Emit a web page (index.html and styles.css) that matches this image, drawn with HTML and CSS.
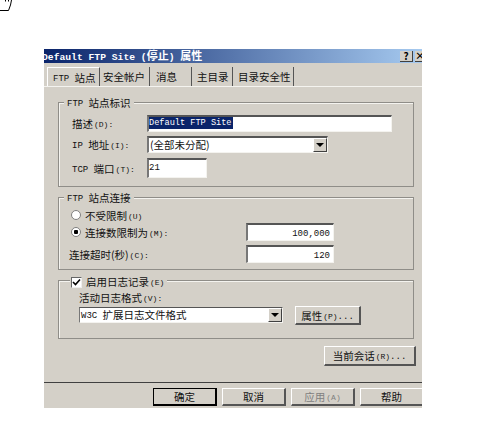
FILE: index.html
```html
<!DOCTYPE html>
<html>
<head>
    <title>Default FTP Site (停止) 属性</title>
    <link rel="stylesheet" href="styles.css">
</head>
<body>
    <svg class="cursor" width="14" height="12" viewBox="0 0 14 12">
        <path d="M11.5 0 L10.5 5 L8.5 10.5 L0 10.5 M5.5 0 V1.5 M8.5 0 V1.5" fill="none" stroke="#000"/>
    </svg>

    <div class="dialog">
        <div class="titlebar">
            <span class="title"><span class="en">Default FTP Site (</span><span class="title-cn">停止</span><span class="en">) </span><span class="title-cn">属性</span></span>
            <span class="cap-btn">?</span>
            <span class="cap-btn cap-close">×</span>
        </div>

        <div class="tabs">
            <div class="tab tab-active"><span class="en">FTP </span>站点</div>
            <div class="tab">安全帐户</div>
            <div class="tab tab-pad">消息</div>
            <div class="tab tab-home">主目录</div>
            <div class="tab tab-last">目录安全性</div>
        </div>

        <div class="page">
            <div class="group group-site">
                <div class="group-title"><span class="en">FTP </span>站点标识</div>
                <div class="form-row">
                    <label class="form-label">描述<span class="mn">(D):</span></label>
                    <div class="field field-desc"><span class="selected en">Default FTP Site</span></div>
                </div>
                <div class="form-row">
                    <label class="form-label"><span class="en">IP </span>地址<span class="mn">(I):</span></label>
                    <div class="field combo combo-ip">
                        <span class="combo-text">(全部未分配)</span>
                        <span class="combo-btn"><i class="arrow"></i></span>
                    </div>
                </div>
                <div class="form-row form-row-tcp">
                    <label class="form-label"><span class="en">TCP </span>端口<span class="mn">(T):</span></label>
                    <div class="field field-port"><span class="en">21</span></div>
                </div>
            </div>

            <div class="group group-conn">
                <div class="group-title"><span class="en">FTP </span>站点连接</div>
                <div class="radio-row">
                    <span class="radio"></span>
                    <span>不受限制<span class="mn">(U)</span></span>
                </div>
                <div class="radio-row radio-row-input">
                    <span class="radio radio-on"></span>
                    <span class="grow">连接数限制为<span class="mn">(M):</span></span>
                    <div class="field field-num"><span class="en">100,000</span></div>
                </div>
                <div class="timeout-row">
                    <span class="grow">连接超时(秒)<span class="mn">(C):</span></span>
                    <div class="field field-num"><span class="en">120</span></div>
                </div>
            </div>

            <div class="group group-log">
                <div class="group-title group-title-check">
                    <span class="check">
                        <svg width="9" height="9" viewBox="0 0 9 9"><path d="M1 4 L3.5 6.5 L8 1.5" fill="none" stroke="#000" stroke-width="1.6"/></svg>
                    </span>
                    <span>启用日志记录<span class="mn">(E)</span></span>
                </div>
                <div class="log-label">活动日志格式<span class="mn">(V):</span></div>
                <div class="log-row">
                    <div class="field combo combo-log">
                        <span class="combo-text"><span class="en">W3C </span>扩展日志文件格式</span>
                        <span class="combo-btn"><i class="arrow"></i></span>
                    </div>
                    <button class="btn btn-props">属性<span class="mn">(P)</span><span class="en">...</span></button>
                </div>
            </div>

            <div class="session-row">
                <button class="btn btn-session">当前会话<span class="mn">(R)</span><span class="en">...</span></button>
            </div>
        </div>

        <div class="footer">
            <button class="btn btn-default">确定</button>
            <button class="btn">取消</button>
            <button class="btn btn-disabled">应用<span class="mn">(A)</span></button>
            <button class="btn">帮助</button>
        </div>
    </div>
</body>
</html>
```

FILE: styles.css
```css
html, body {
    margin: 0;
    padding: 0;
    background: #fff;
}

body {
    padding: 49px 0 0 44px;
    font-family: "Noto Sans CJK SC", "Liberation Sans", sans-serif;
    font-size: 10.5px;
    color: #111;
}

.en {
    font-family: "Liberation Mono", monospace;
    font-size: 9px;
    vertical-align: 1px;
}

.mn {
    margin-left: 1px;
    font-family: "Liberation Mono", monospace;
    font-size: 8px;
    vertical-align: 1px;
}

.cursor {
    position: absolute;
    left: 0;
    top: 0;
}

.dialog {
    width: 378px;
    height: 359px;
    background: #d4d0c8;
    overflow: hidden;
}

.titlebar {
    display: flex;
    align-items: center;
    height: 14px;
    background: linear-gradient(to right, #0a246a, #a6caf0);
    color: #fff;
    font-weight: bold;
}

.title {
    flex: 1;
    margin-left: -2px;
    white-space: nowrap;
    line-height: 14px;
}

.title .en {
    font-size: 9.7px;
    font-weight: bold;
    vertical-align: 0;
}

.title-cn {
    font-size: 11px;
    line-height: 14px;
}

.cap-btn {
    width: 13px;
    height: 11px;
    margin-right: 2px;
    background: #d4d0c8;
    border-right: 1px solid #404040;
    border-bottom: 1px solid #404040;
    box-sizing: border-box;
    color: #000;
    font-size: 10px;
    line-height: 10px;
    text-align: center;
}

.cap-close {
    flex: none;
    width: 7px;
    margin-right: 0;
    border-right: 0;
    overflow: hidden;
}

.tabs {
    display: flex;
    height: 23px;
    box-sizing: border-box;
    padding: 4px 0 0 3px;
}

.tab {
    height: 19px;
    box-sizing: border-box;
    padding: 0 4px 0 3px;
    border-right: 1px solid #555;
    line-height: 19px;
    white-space: nowrap;
}

.tab-active {
    padding: 0 5px;
    width: 53px;
    border-left: 1px solid #fff;
    border-top: 1px solid #fff;
}

.tab-pad {
    width: 42px;
    padding-left: 6px;
}

.tab-home {
    width: 41px;
    padding-left: 5px;
}

.tab-last {
    width: 61px;
    padding-left: 5px;
}

.page {
    height: 296px;
    box-sizing: border-box;
    padding: 15px 7px 0 14px;
    border-top: 1px solid #f4f3ef;
}

.group {
    position: relative;
    box-sizing: border-box;
    width: 356px;
    border: 1px solid #8f8d88;
    box-shadow: inset 1px 1px 0 #f4f3ef;
}

.group-title {
    position: absolute;
    top: -8px;
    left: 5px;
    padding: 0 3px;
    background: #d4d0c8;
    line-height: 15px;
    white-space: nowrap;
}

.group-title-check {
    display: flex;
    align-items: center;
    gap: 4px;
    left: 11px;
    padding: 0 3px 0 1px;
    top: -7px;
}

.group-site {
    height: 85px;
    padding: 12px 0 0 13px;
}

.group-conn {
    height: 73px;
    margin-top: 10px;
    padding: 9px 0 0 10px;
}

.group-log {
    height: 59px;
    margin-top: 10px;
    padding: 10px 0 0 20px;
}

.form-row {
    display: flex;
    align-items: center;
    height: 17px;
    margin-bottom: 4px;
}

.form-row-tcp {
    height: 20px;
    margin-top: 5px;
}

.form-label {
    width: 75px;
    white-space: nowrap;
}

.field {
    height: 100%;
    box-sizing: border-box;
    background: #fff;
    border-top: 2px solid #555;
    border-left: 2px solid #777;
    border-right: 1px solid #f4f3ef;
    border-bottom: 1px solid #f4f3ef;
    line-height: 14px;
    white-space: nowrap;
}

.field-desc {
    width: 245px;
}

.selected {
    display: inline-block;
    height: 12px;
    padding-right: 1px;
    background: #0a246a;
    color: #fff;
    font-size: 8.6px;
    line-height: 12px;
    vertical-align: top;
}

.field-port {
    width: 60px;
}

.combo {
    display: flex;
    justify-content: space-between;
    align-items: center;
}

.combo-ip {
    width: 181px;
}

.combo-text {
    padding-left: 1px;
}

.combo-btn {
    display: flex;
    align-items: center;
    justify-content: center;
    width: 14px;
    height: 100%;
    box-sizing: border-box;
    background: #d4d0c8;
    border-right: 1px solid #404040;
    border-bottom: 1px solid #404040;
    border-left: 1px solid #fff;
    border-top: 1px solid #fff;
}

.arrow {
    width: 0;
    height: 0;
    border-left: 4px solid transparent;
    border-right: 4px solid transparent;
    border-top: 4px solid #000;
}

.radio-row {
    display: flex;
    align-items: center;
    gap: 4px;
    height: 16px;
    padding-left: 2px;
}

.radio-row-input {
    height: 18px;
    padding-right: 79px;
}

.radio {
    flex: none;
    width: 10px;
    height: 10px;
    box-sizing: border-box;
    border-radius: 50%;
    background: #fff;
    border: 1px solid #808080;
}

.radio-on {
    background: radial-gradient(circle, #000 0, #000 2px, #fff 2.5px);
}

.grow {
    flex: 1;
    white-space: nowrap;
}

.timeout-row {
    display: flex;
    align-items: center;
    height: 18px;
    margin-top: 4px;
    padding-right: 79px;
}

.field-num {
    width: 88px;
    text-align: right;
    padding-right: 3px;
    line-height: 15px;
}

.check {
    display: flex;
    align-items: center;
    justify-content: center;
    width: 11px;
    height: 11px;
    box-sizing: border-box;
    background: #fff;
    border-top: 1px solid #666;
    border-left: 1px solid #666;
    border-right: 1px solid #eee;
    border-bottom: 1px solid #eee;
}

.log-label {
    height: 14px;
    line-height: 14px;
}

.log-row {
    display: flex;
    align-items: flex-start;
    gap: 12px;
    margin-top: 1px;
}

.combo-log {
    width: 204px;
    height: 16px;
    margin-top: 1px;
    border-top-width: 1px;
    border-left-width: 1px;
}

.btn {
    width: 64px;
    height: 18px;
    flex: none;
    box-sizing: border-box;
    margin: 0;
    padding: 0;
    background: #d4d0c8;
    border-top: 1px solid #fff;
    border-left: 1px solid #fff;
    border-right: 2px solid #555;
    border-bottom: 2px solid #555;
    font-family: inherit;
    font-size: 10.5px;
    color: #111;
    white-space: nowrap;
}

.btn-props {
    width: 66px;
    height: 19px;
}

.session-row {
    display: flex;
    justify-content: flex-end;
    margin-top: 7px;
}

.btn-session {
    width: 92px;
    height: 20px;
    margin-right: -1px;
}

.footer {
    display: flex;
    gap: 5px;
    box-sizing: border-box;
    height: 25px;
    padding: 5px 0 0 109px;
    border-top: 1px solid #404040;
}

.btn-default {
    border: 1px solid #000;
    border-right-width: 2px;
    border-bottom-width: 2px;
}

.btn-disabled {
    color: #808080;
}
```
